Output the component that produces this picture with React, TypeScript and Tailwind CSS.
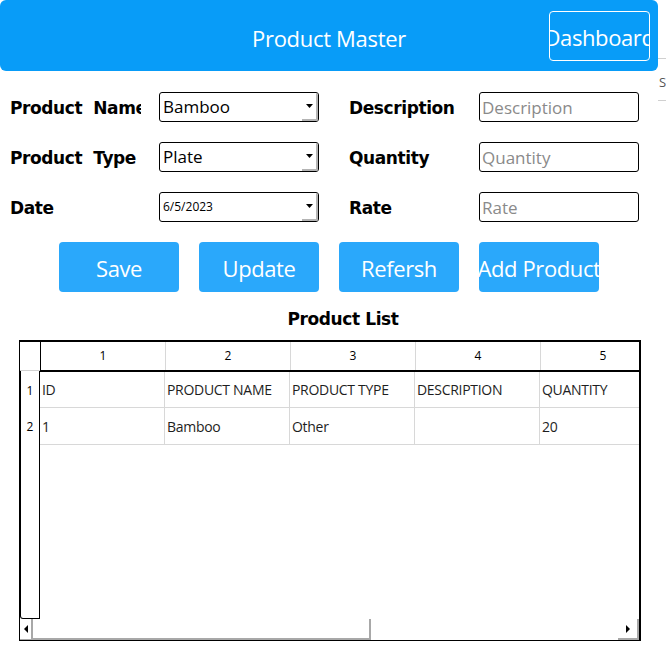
import React from "react";

const labelCls =
  "w-[131px] overflow-hidden whitespace-pre pt-[3px] text-[17px] font-bold text-black font-['DejaVu_Sans',sans-serif] tracking-[-0.4px]";

function SelectBox({ value, small }: { value: string; small?: boolean }) {
  return (
    <div className="flex h-[30px] w-[160px] items-stretch overflow-hidden rounded-[3px] border border-black bg-white">
      <div
        className={`flex flex-1 items-center pl-[3px] text-black ${small ? "text-[12px]" : "text-[17px]"}`}
      >
        {value}
      </div>
      <div className="flex w-[16px] items-center justify-center border-b-2 border-r-2 border-[#b4b4b4]">
        <svg width="7" height="4" viewBox="0 0 7 4">
          <path d="M0 0h7L3.5 4z" fill="#000" />
        </svg>
      </div>
    </div>
  );
}

function TextBox({ placeholder }: { placeholder: string }) {
  return (
    <input
      type="text"
      placeholder={placeholder}
      className="h-[30px] w-[160px] rounded-[3px] border border-black bg-white pl-[2px] text-[17px] text-black placeholder:text-[#8a8a8a] focus:outline-none"
    />
  );
}

const rows = [
  ["ID", "PRODUCT NAME", "PRODUCT TYPE", "DESCRIPTION", "QUANTITY"],
  ["1", "Bamboo", "Other", "", "20"],
];

export default function App() {
  return (
    <div className="relative h-[651px] w-[666px] overflow-hidden bg-white font-['Open_Sans','Noto_Sans',sans-serif]">
      <div className="flex h-[71px] items-start">
        <header className="grid h-[71px] w-[658px] shrink-0 grid-cols-[1fr_auto_1fr] items-center rounded-[6px] bg-[#089cf8] text-white">
          <div />
          <h1 className="pt-[5px] text-[22px] tracking-[-0.3px]">Product Master</h1>
          <div className="flex justify-end pr-[8px]">
            <button
              type="button"
              className="flex h-[50px] w-[101px] items-center justify-center overflow-hidden whitespace-nowrap rounded-[4px] border border-white pt-[3px] text-[22px] tracking-[-0.4px]"
            >
              Dashboard
            </button>
          </div>
        </header>
        <div className="flex h-[71px] w-[8px] flex-col overflow-visible pt-[58px]">
          <div className="border-t border-[#d0d0d0]" />
          <div className="h-[41px] shrink-0 pl-[1px] pt-[17px] text-[13px] leading-none text-[#555]">S</div>
          <div className="shrink-0 border-t border-[#d0d0d0]" />
        </div>
      </div>

      <div className="mt-[21px] flex flex-col gap-[20px] pl-[10px]">
        {[
          { l1: "Product  Name", v: "Bamboo", l2: "Description" },
          { l1: "Product  Type", v: "Plate", l2: "Quantity" },
          { l1: "Date", v: "6/5/2023", l2: "Rate", small: true },
        ].map((r) => (
          <div key={r.l1} className="flex h-[30px] items-center">
            <div className="w-[149px]">
              <div className={labelCls}>{r.l1}</div>
            </div>
            <SelectBox value={r.v} small={r.small} />
            <div className="w-[160px] pl-[30px]">
              <div className={labelCls}>{r.l2}</div>
            </div>
            <TextBox placeholder={r.l2} />
          </div>
        ))}
      </div>

      <div className="mt-[20px] flex gap-[20px] pl-[59px]">
        {["Save", "Update", "Refersh", "Add Product"].map((b) => (
          <button
            key={b}
            type="button"
            className="flex h-[50px] w-[120px] items-center justify-center overflow-hidden whitespace-nowrap rounded-[4px] bg-[#2aa8fb] pt-[3px] text-[22px] tracking-[-0.4px] text-white"
          >
            {b}
          </button>
        ))}
      </div>

      <h2 className="mt-[15px] pl-[20px] text-center text-[17px] font-bold leading-[24px] text-black font-['DejaVu_Sans',sans-serif] tracking-[-0.4px]">
        Product List
      </h2>

      <div className="ml-[19px] mt-[9px] flex h-[301px] w-[622px] flex-col border-b border-l border-r-2 border-t-2 border-black">
        <div className="flex flex-1 overflow-hidden">
          <div className="flex w-[20px] flex-col">
            <div className="h-[29px] border-b border-[#d0d0d0]" />
            <div className="flex flex-1 flex-col rounded-bl-[3px] border-b border-l border-r border-black">
              {["1", "2"].map((n, i) => (
                <div
                  key={n}
                  className={`flex items-center justify-center pt-[3px] text-[12px] text-black ${i === 0 ? "h-[36px]" : "h-[37px]"}`}
                >
                  {n}
                </div>
              ))}
            </div>
          </div>
          <div className="flex flex-1 flex-col overflow-hidden">
            <div className="flex h-[30px] border-b-2 border-l border-black">
              {[1, 2, 3, 4, 5].map((n) => (
                <div
                  key={n}
                  className="flex w-[125px] shrink-0 items-center justify-center border-r border-[#d8d8d8] text-[12px] text-black"
                >
                  {n}
                </div>
              ))}
            </div>
            {rows.map((r, i) => (
              <div
                key={i}
                className={`flex border-b border-[#d8d8d8] ${i === 0 ? "h-[36px]" : "h-[37px]"}`}
              >
                {r.map((c, j) => (
                  <div
                    key={j}
                    className="flex w-[125px] shrink-0 items-center overflow-hidden whitespace-nowrap border-r border-[#d8d8d8] pl-[2px] text-[14px] tracking-[-0.3px] text-[#1e1e1e]"
                  >
                    {c}
                  </div>
                ))}
              </div>
            ))}
          </div>
        </div>
        <div className="flex h-[21px]">
          <div className="flex w-[13px] items-center justify-center border-b border-r-2 border-[#a8a8a8]">
            <svg width="4" height="8" viewBox="0 0 4 8">
              <path d="M4 0v8L0 4z" fill="#000" />
            </svg>
          </div>
          <div className="w-[338px] border-b-2 border-r-2 border-[#a8a8a8]" />
          <div className="flex-1" />
          <div className="flex w-[21px] items-center justify-center border-b-2 border-r-2 border-[#a8a8a8]">
            <svg width="4" height="8" viewBox="0 0 4 8">
              <path d="M0 0v8L4 4z" fill="#000" />
            </svg>
          </div>
        </div>
      </div>
    </div>
  );
}
